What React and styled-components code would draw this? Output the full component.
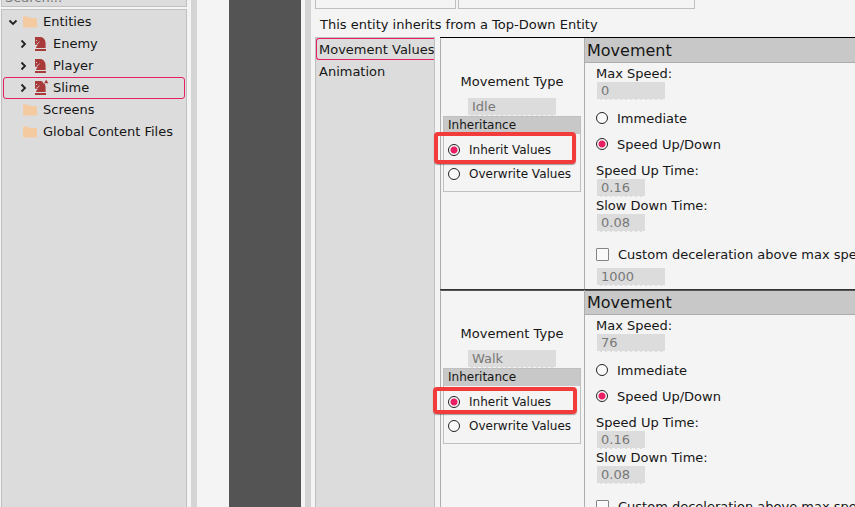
import React from "react";
import styled, { createGlobalStyle, css } from "styled-components";

const c = {
  page: "#f4f4f4",
  panel: "#dcdcdc",
  header: "#c8c8c8",
  line: "#c0c0c0",
  rule: "#adadad",
  split: "#d4d4d4",
  dark: "#545454",
  text: "#161616",
  muted: "#787878",
  accent: "#e91e63",
  mark: "#f23c3c",
  entity: "#a83a3a",
  folder: "#f4cba0",
};

const GlobalStyle = createGlobalStyle`
  *, *::before, *::after { box-sizing: border-box; }
  body { margin: 0; overflow: hidden; background: ${c.page}; }
  body, button, input {
    font-family: Verdana, "DejaVu Sans", sans-serif;
    font-size: 13px;
    color: ${c.text};
  }
`;

const Shell = styled.div`
  display: flex;
  height: 100vh;
  overflow: hidden;
`;

const Sidebar = styled.aside`
  flex: 0 0 191px;
  display: flex;
  flex-direction: column;
  gap: 2px;
  padding: 0 4px 0 1px;
`;

const SearchBox = styled.input`
  flex: none;
  width: 100%;
  height: 20px;
  margin-top: -13px;
  padding: 0 3px;
  border: 1px solid ${c.line};
  background: ${c.panel};
  &::placeholder { color: ${c.muted}; opacity: 1; }
`;

const Tree = styled.ul`
  flex: 1;
  margin: 0;
  padding: 1px;
  list-style: none;
  border: 1px solid ${c.line};
  border-bottom: 0;
  background: ${c.panel};
`;

const TreeButton = styled.button`
  display: flex;
  align-items: center;
  width: 100%;
  height: 22px;
  padding: 0 0 0 ${(p) => (p.$level ? 13 : 3)}px;
  border: 1px solid ${(p) => (p.$selected ? c.accent : "transparent")};
  border-radius: 3px;
  background: none;
  text-align: left;
  white-space: nowrap;
`;

const Glyph = styled.svg`
  flex: none;
  overflow: visible;
`;

const ArrowSlot = styled.span`
  display: flex;
  width: 12px;
  margin-right: 4px;
`;

const TreeLabel = styled.span`
  margin-left: 6px;
  line-height: 16px;
  padding-bottom: 1px;
`;

const Splitter = styled.div`
  flex: 0 0 6px;
  background: ${c.split};
`;

const Canvas = styled.div`
  flex: 0 0 108px;
  padding: 0 4px 0 32px;
  &::before {
    content: "";
    display: block;
    height: 100%;
    background: ${c.dark};
  }
`;

const Editor = styled.main`
  flex: 1;
  min-width: 0;
  display: flex;
  flex-direction: column;
  padding-left: 4px;
`;

const TopPanels = styled.div`
  flex: none;
  display: flex;
  gap: 2px;
  height: 9px;
`;

const TopPanel = styled.div`
  flex: 0 1 ${(p) => (p.$wide ? 237 : 141)}px;
  border: 1px solid ${c.line};
  border-top: 0;
`;

const Notice = styled.p`
  flex: none;
  margin: 0;
  padding: 0 5px;
  height: 28px;
  line-height: 32px;
  white-space: nowrap;
`;

const Workspace = styled.div`
  flex: 1;
  min-height: 0;
  display: flex;
  gap: 5px;
`;

const SectionList = styled.nav`
  flex: 0 0 120px;
  overflow: hidden;
  border: 1px solid ${c.line};
  border-bottom: 0;
  background: ${c.panel};
`;

const SectionButton = styled.button`
  display: block;
  width: 100%;
  height: 22px;
  padding: 0 0 0 2px;
  border: 1px solid ${(p) => (p.$selected ? c.accent : "transparent")};
  border-right: 0;
  border-radius: 3px 0 0 3px;
  background: none;
  text-align: left;
  white-space: nowrap;
  overflow: hidden;
`;

const MovementList = styled.div`
  flex: 1;
  min-width: 0;
`;

const MovementRow = styled.section`
  display: grid;
  grid-template-columns: 145px 1fr;
  height: 252px;
  border-top: 1px solid ${(p) => (p.$ruled ? "#333" : "#000")};
`;

const TypeCell = styled.div`
  display: flex;
  flex-direction: column;
  align-items: center;
  padding: 34px 4px 0 2px;
  border-top: 1px solid ${(p) => (p.$ruled ? "#555" : "transparent")};
  border-left: 1px solid ${c.rule};
`;

const DetailCell = styled.div`
  min-width: 0;
  overflow: hidden;
  border-left: 1px solid ${c.rule};
  margin-left: -1px;
`;

const CellHeader = styled.h2`
  margin: 0 0 2px;
  padding: 0 2px;
  height: 25px;
  border-top: 1px solid ${(p) => (p.$ruled ? "#555" : c.header)};
  border-bottom: 1px solid ${c.rule};
  background: ${c.header};
  font-size: 16px;
  font-weight: 400;
  line-height: 23px;
`;

const Fields = styled.div`
  display: flex;
  flex-direction: column;
  align-items: flex-start;
  padding-left: 11px;
`;

const FieldLabel = styled.label`
  line-height: 17px;
  white-space: nowrap;
`;

const ValueBox = styled.input`
  display: block;
  width: ${(p) => p.$width}px;
  height: 18px;
  padding: 0 4px;
  border: 0;
  border-bottom: 1px dashed ${c.page};
  border-radius: 0;
  background: ${c.panel};
  color: ${c.muted};
  margin: 0 1px;
`;

const TypeValue = styled(ValueBox)`
  margin-top: 8px;
`;

const Choices = styled.div`
  padding: 5px 0;
`;

const choiceRow = css`
  display: flex;
  align-items: center;
  gap: 9px;
  white-space: nowrap;
`;

const Choice = styled.label`
  ${choiceRow}
  position: relative;
  height: ${(p) => (p.$small ? 24 : 26)}px;
  font-size: ${(p) => (p.$small ? 12 : 13)}px;
`;

const CheckRow = styled.label`
  ${choiceRow}
  height: 36px;
  padding-top: 8px;
`;

const Radio = styled.input`
  appearance: none;
  flex: none;
  width: 12px;
  height: 12px;
  margin: 0;
  border: 1px solid #222;
  border-radius: 50%;
  background: #fafafa;
  &:checked {
    background: radial-gradient(circle, ${c.accent} 3px, #fafafa 4px);
  }
`;

const Check = styled.input`
  appearance: none;
  flex: none;
  width: 13px;
  height: 13px;
  margin: 0;
  border: 1px solid #858585;
  border-radius: 1px;
  background: #fafafa;
`;

const Group = styled.fieldset`
  align-self: stretch;
  min-width: 0;
  margin: 0;
  padding: 0;
  border: 1px solid ${c.line};
`;

const GroupTitle = styled.div`
  height: 17px;
  padding: 0 4px;
  background: ${c.header};
  font-size: 12px;
  line-height: 17px;
`;

const GroupBody = styled.div`
  padding: 4px 0 5px 4px;
`;

const Highlight = styled.span`
  position: absolute;
  inset: ${(p) => (p.$flat ? "-3px 3px 0 -15px" : "-6px 4px -2px -14px")};
  border: 4px solid ${c.mark};
  border-radius: 4px;
  box-shadow: 0 1px 1px rgba(0, 0, 0, 0.35);
  pointer-events: none;
`;

const Arrow = ({ open }) => (
  <Glyph width="12" height="12" viewBox="0 0 12 12" aria-hidden="true">
    <path
      d={open ? "M2.5 4.5 6 8 9.5 4.5" : "M4.5 2.5 8 6 4.5 9.5"}
      fill="none"
      stroke="#222"
      strokeWidth="1.8"
    />
  </Glyph>
);

const FolderIcon = () => (
  <Glyph width="14" height="12" viewBox="0 0 14 12" aria-hidden="true">
    <path d="M0 1.5Q0 .5 1 .5H5L6.5 2H13Q14 2 14 3V10.5Q14 11.5 13 11.5H1Q0 11.5 0 10.5Z" fill={c.folder} />
  </Glyph>
);

const EntityIcon = ({ derived }) => (
  <Glyph width="14" height="14" viewBox="0 0 14 14" aria-hidden="true">
    <path
      d="M2 0H8C10.8.5 12.6 3 12.6 6.5V11H3C3 9.6 4 8.6 5 7.8H2Z"
      fill={c.entity}
    />
    <path d="M3.6 6.8 5.2 6.2 6.4 4.6" fill="none" stroke={c.panel} strokeWidth=".7" />
    <path d="M3 3H4V4H3Z" fill={c.panel} />
    <path d="M2 12H13V14H2Z" fill={c.entity} />
    {derived && (
      <>
        <path d="M9.5-1H15V3H12L10 2Z" fill={c.panel} />
        <path d="M11 2.2 13.2-1.2 15.4 2.2Z" fill={c.entity} />
      </>
    )}
  </Glyph>
);

const nodes = [
  { label: "Entities", kind: "folder", arrow: true, open: true },
  { label: "Enemy", kind: "entity", arrow: true, level: 1 },
  { label: "Player", kind: "entity", arrow: true, level: 1 },
  { label: "Slime", kind: "entity", arrow: true, level: 1, selected: true },
  { label: "Screens", kind: "folder" },
  { label: "Global Content Files", kind: "folder" },
];

const movements = [
  { id: "idle", name: "Idle", speed: "0" },
  { id: "walk", name: "Walk", speed: "76" },
];

function Movement({ id, name, speed, ruled }) {
  return (
    <MovementRow $ruled={ruled}>
      <TypeCell $ruled={ruled}>
        <FieldLabel htmlFor={`${id}-type`}>Movement Type</FieldLabel>
        <TypeValue id={`${id}-type`} $width={88} defaultValue={name} disabled />
        <Group aria-label="Inheritance">
          <GroupTitle>Inheritance</GroupTitle>
          <GroupBody>
            <Choice $small>
              <Radio type="radio" name={`${id}-inherit`} defaultChecked />
              Inherit Values
              <Highlight $flat={ruled} />
            </Choice>
            <Choice $small>
              <Radio type="radio" name={`${id}-inherit`} />
              Overwrite Values
            </Choice>
          </GroupBody>
        </Group>
      </TypeCell>
      <DetailCell>
        <CellHeader $ruled={ruled}>Movement</CellHeader>
        <Fields>
          <FieldLabel htmlFor={`${id}-max`}>Max Speed:</FieldLabel>
          <ValueBox id={`${id}-max`} $width={68} defaultValue={speed} disabled />
          <Choices>
            <Choice>
              <Radio type="radio" name={`${id}-accel`} />
              Immediate
            </Choice>
            <Choice>
              <Radio type="radio" name={`${id}-accel`} defaultChecked />
              Speed Up/Down
            </Choice>
          </Choices>
          <FieldLabel htmlFor={`${id}-up`}>Speed Up Time:</FieldLabel>
          <ValueBox id={`${id}-up`} $width={48} defaultValue="0.16" disabled />
          <FieldLabel htmlFor={`${id}-down`}>Slow Down Time:</FieldLabel>
          <ValueBox id={`${id}-down`} $width={48} defaultValue="0.08" disabled />
          <CheckRow>
            <Check type="checkbox" />
            Custom deceleration above max speed
          </CheckRow>
          <ValueBox aria-label="Deceleration" $width={68} defaultValue="1000" disabled />
        </Fields>
      </DetailCell>
    </MovementRow>
  );
}

export default function App() {
  return (
    <>
      <GlobalStyle />
      <Shell>
        <Sidebar>
          <SearchBox type="text" placeholder="Search..." aria-label="Search" />
          <Tree>
            {nodes.map((n) => (
              <li key={n.label}>
                <TreeButton type="button" $level={n.level} $selected={n.selected}>
                  <ArrowSlot>{n.arrow && <Arrow open={n.open} />}</ArrowSlot>
                  {n.kind === "folder" ? <FolderIcon /> : <EntityIcon derived={n.selected} />}
                  <TreeLabel>{n.label}</TreeLabel>
                </TreeButton>
              </li>
            ))}
          </Tree>
        </Sidebar>
        <Splitter />
        <Canvas />
        <Splitter />
        <Editor>
          <TopPanels>
            <TopPanel />
            <TopPanel $wide />
          </TopPanels>
          <Notice>This entity inherits from a Top-Down Entity</Notice>
          <Workspace>
            <SectionList>
              <SectionButton type="button" $selected>Movement Values</SectionButton>
              <SectionButton type="button">Animation</SectionButton>
            </SectionList>
            <MovementList>
              {movements.map((m, i) => (
                <Movement key={m.id} {...m} ruled={i > 0} />
              ))}
            </MovementList>
          </Workspace>
        </Editor>
      </Shell>
    </>
  );
}
